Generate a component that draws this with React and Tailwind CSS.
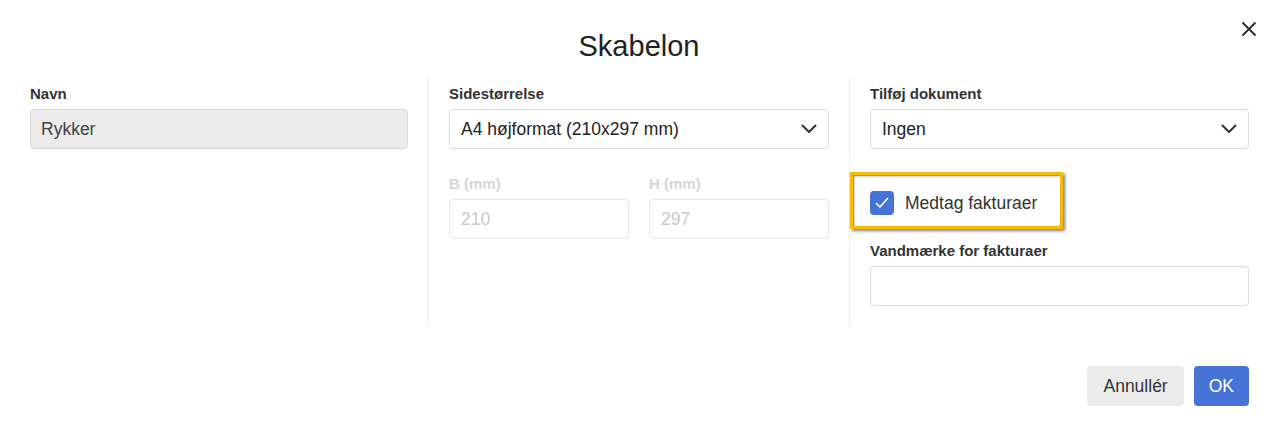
import React from "react";

const font = { fontFamily: '"Liberation Sans", Arial, sans-serif' };

function Label({ children, muted }) {
  return (
    <div
      className={`h-5 leading-5 text-[15px] font-bold mb-[5px] ${
        muted ? "text-[#d6d6d6]" : "text-[#333]"
      }`}
    >
      {children}
    </div>
  );
}

function Chevron() {
  return (
    <svg width="16" height="10" viewBox="0 0 16 10" fill="none">
      <polyline
        points="1.5,1.5 8,8 14.5,1.5"
        stroke="#333"
        strokeWidth="2"
        strokeLinecap="round"
        strokeLinejoin="round"
      />
    </svg>
  );
}

function Select({ value }) {
  return (
    <div className="h-10 flex items-center justify-between border border-[#dcdcdc] rounded-[4px] bg-white pl-[11px] pr-[11px] text-[17.5px] text-[#222]">
      <span>{value}</span>
      <Chevron />
    </div>
  );
}

export default function App() {
  return (
    <div className="w-[1278px] h-[435px] bg-white text-[#333]" style={font}>
      {/* ================= HEADER ================= */}
      <div className="relative h-[78px] pt-[29px] flex justify-center">
        <h1 className="text-[29px] leading-[34px] text-[#222]">Skabelon</h1>
        <button className="absolute right-[21px] top-[21px] w-4 h-4 flex items-center justify-center">
          <svg width="16" height="16" viewBox="0 0 16 16" fill="none">
            <path d="M1.5 1.5 L14.5 14.5 M14.5 1.5 L1.5 14.5" stroke="#2a2a2a" strokeWidth="1.8" />
          </svg>
        </button>
      </div>

      {/* ================= COLUMNS ================= */}
      <div className="flex h-[248px] pl-[30px] pr-[29px]">
        {/* Navn */}
        <div className="w-[378px] pt-[6px]">
          <Label>Navn</Label>
          <div className="h-10 flex items-center border border-[#d9d9d9] rounded-[4px] bg-[#ebebeb] px-[10px] text-[17.5px] text-[#444]">
            Rykker
          </div>
        </div>

        <div className="w-px bg-[#ececec] mx-5" />

        {/* Sidestørrelse */}
        <div className="flex-1 pt-[6px]">
          <Label>Sidestørrelse</Label>
          <Select value="A4 højformat (210x297 mm)" />
          <div className="grid grid-cols-2 gap-5 mt-[25px]">
            <div>
              <Label muted>B (mm)</Label>
              <div className="h-10 flex items-center border border-[#e6e6e6] rounded-[4px] px-[11px] text-[17.5px] text-[#c9c9c9]">
                210
              </div>
            </div>
            <div>
              <Label muted>H (mm)</Label>
              <div className="h-10 flex items-center border border-[#e6e6e6] rounded-[4px] px-[11px] text-[17.5px] text-[#c9c9c9]">
                297
              </div>
            </div>
          </div>
        </div>

        <div className="w-px bg-[#ececec] mx-5" />

        {/* Tilføj dokument */}
        <div className="w-[379px] pt-[6px]">
          <Label>Tilføj dokument</Label>
          <Select value="Ingen" />

          <div className="relative mt-[42px] h-6 flex items-center gap-[11px]">
            <div className="w-6 h-6 rounded-[4px] bg-[#4674d6] flex items-center justify-center">
              <svg width="14" height="12" viewBox="0 0 14 12" fill="none">
                <polyline
                  points="1.5,6.5 5,10 12.5,1.5"
                  stroke="white"
                  strokeWidth="1.6"
                  strokeLinecap="round"
                  strokeLinejoin="round"
                />
              </svg>
            </div>
            <span className="text-[17.5px] text-[#333]">Medtag fakturaer</span>
            {/* highlight annotation */}
            <div className="absolute left-[-20px] top-[-19px] w-[213px] h-[57px] border-[3px] border-[#fbb900] shadow-[inset_1px_1px_2px_rgba(0,0,0,0.55),2px_2px_3px_rgba(0,0,0,0.5)] pointer-events-none" />
          </div>

          <div className="mt-[26px]">
            <Label>Vandmærke for fakturaer</Label>
            <div className="h-10 border border-[#dcdcdc] rounded-[4px] bg-white" />
          </div>
        </div>
      </div>

      {/* ================= FOOTER ================= */}
      <div className="flex justify-end gap-[10px] pr-[29px] mt-10">
        <button className="h-10 px-4 rounded-[4px] bg-[#ebebeb] text-[17.5px] text-[#333]">
          Annullér
        </button>
        <button className="h-10 px-[15px] rounded-[4px] bg-[#4674d6] text-[17.5px] text-white">
          OK
        </button>
      </div>
    </div>
  );
}
